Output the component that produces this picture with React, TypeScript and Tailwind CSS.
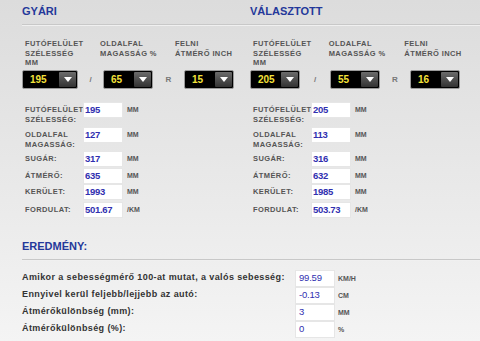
const sans = "font-['Liberation_Sans',Arial,sans-serif]";

type Info = { label: string[]; value: string; unit: string; h: string };

const columns = [
  {
    title: "GYÁRI",
    selects: [
      { value: "195", w: "w-[56px]", sep: "/" },
      { value: "65", w: "w-[50px]", sep: "R" },
      { value: "15", w: "w-[50px]", sep: "" },
    ],
    info: [
      { label: ["FUTÓFELÜLET", "SZÉLESSÉG:"], value: "195", unit: "MM", h: "h-[25px]" },
      { label: ["OLDALFAL", "MAGASSÁG:"], value: "127", unit: "MM", h: "h-[24px]" },
      { label: ["SUGÁR:"], value: "317", unit: "MM", h: "h-[17px]" },
      { label: ["ÁTMÉRŐ:"], value: "635", unit: "MM", h: "h-[16px]" },
      { label: ["KERÜLET:"], value: "1993", unit: "MM", h: "h-[18px]" },
      { label: ["FORDULAT:"], value: "501.67", unit: "/KM", h: "h-[17px]" },
    ] as Info[],
  },
  {
    title: "VÁLASZTOTT",
    selects: [
      { value: "205", w: "w-[50px]", sep: "/" },
      { value: "55", w: "w-[50px]", sep: "R" },
      { value: "16", w: "w-[50px]", sep: "" },
    ],
    info: [
      { label: ["FUTÓFELÜLET", "SZÉLESSÉG:"], value: "205", unit: "MM", h: "h-[25px]" },
      { label: ["OLDALFAL", "MAGASSÁG:"], value: "113", unit: "MM", h: "h-[24px]" },
      { label: ["SUGÁR:"], value: "316", unit: "MM", h: "h-[17px]" },
      { label: ["ÁTMÉRŐ:"], value: "632", unit: "MM", h: "h-[16px]" },
      { label: ["KERÜLET:"], value: "1985", unit: "MM", h: "h-[18px]" },
      { label: ["FORDULAT:"], value: "503.73", unit: "/KM", h: "h-[17px]" },
    ] as Info[],
  },
];

const headers = [
  ["FUTÓFELÜLET", "SZÉLESSÉG", "MM"],
  ["OLDALFAL", "MAGASSÁG %"],
  ["FELNI", "ÁTMÉRŐ INCH"],
];

const results = [
  { label: "Amikor a sebességmérő 100-at mutat, a valós sebesség:", value: "99.59", unit: "KM/H" },
  { label: "Ennyivel kerül feljebb/lejjebb az autó:", value: "-0.13", unit: "CM" },
  { label: "Átmérőkülönbség (mm):", value: "3", unit: "MM" },
  { label: "Átmérőkülönbség (%):", value: "0", unit: "%" },
];

function Rule() {
  return (
    <div>
      <div className="h-px bg-[#c8c8c8]" />
      <div className="h-px bg-[#f0f0f0]" />
    </div>
  );
}

function Select({ value, w }: { value: string; w: string }) {
  return (
    <div
      className={`flex h-[19px] ${w} items-center rounded-[2px] border border-[#9a9a9a] bg-black p-px`}
    >
      <span className="flex-1 pl-[6px] text-[10px] font-bold leading-none text-[#f4e23a]">
        {value}
      </span>
      <span className="flex h-full w-[17px] items-center justify-center rounded-[1px] bg-linear-to-b from-[#6c6c6c] to-[#333333]">
        <svg width="8" height="5" viewBox="0 0 8 5">
          <path d="M0 0h8L4 5z" fill="#ffffff" />
        </svg>
      </span>
    </div>
  );
}

export default function App() {
  return (
    <div
      className={`${sans} h-[341px] w-[480px] overflow-hidden bg-linear-to-b from-[#dcdcdc] to-[#f4f4f4]`}
    >
      <div className="flex">
        {columns.map((col, ci) => (
          <div
            key={col.title}
            className={ci === 0 ? "w-[250px] pl-[22px]" : "w-[230px]"}
          >
            <h2 className="pt-[5px] text-[11px] font-bold leading-[13px] text-[#24389a]">
              {col.title}
            </h2>
            <div className="mt-[6px]">
              <Rule />
            </div>

            <div className="mt-[13px] flex h-[31px] pl-[3px]">
              {headers.map((lines) => (
                <div
                  key={lines[0]}
                  className="w-[76px] text-[7.5px] font-bold leading-[9.5px] tracking-[0.4px] text-[#555555]"
                >
                  {lines.map((l) => (
                    <div key={l}>{l}</div>
                  ))}
                </div>
              ))}
            </div>

            <div className="flex items-center">
              {col.selects.map((s, i) => (
                <div
                  key={i}
                  className={`flex items-center ${
                    i === 2 ? "" : ci === 0 ? "w-[81px]" : "w-[80px]"
                  }`}
                >
                  <Select value={s.value} w={s.w} />
                  {s.sep && (
                    <span className="flex-1 text-center text-[8px] font-bold text-[#777777]">
                      {s.sep}
                    </span>
                  )}
                </div>
              ))}
            </div>

            <div className="mt-[13px] pl-[3px]">
              {col.info.map((row) => (
                <div key={row.label[0]} className={`flex items-start ${row.h}`}>
                  <div className="w-[58px] pt-[3px] text-[7.5px] font-bold leading-[9.5px] tracking-[0.4px] text-[#555555]">
                    {row.label.map((l) => (
                      <div key={l}>{l}</div>
                    ))}
                  </div>
                  <div className="flex h-[16px] w-[40px] items-center border border-[#e6e6e6] bg-white pl-[1px] text-[9.5px] font-bold tracking-[-0.3px] text-[#3030b0]">
                    {row.value}
                  </div>
                  <span className="ml-[4px] pt-[3px] text-[7px] font-bold leading-[9px] text-[#555555]">
                    {row.unit}
                  </span>
                </div>
              ))}
            </div>
          </div>
        ))}
      </div>

      <div className="pl-[22px]">
        <h2 className="mt-[21px] text-[11px] font-bold leading-[13px] text-[#24389a]">
          EREDMÉNY:
        </h2>
        <div className="mt-[6px]">
          <Rule />
        </div>
        <div className="mt-[9px]">
          {results.map((r) => (
            <div key={r.label} className="flex h-[17px] items-start">
              <div className="w-[273px] pt-[2px] text-[9px] font-bold leading-[11px] tracking-[0.4px] text-[#333333]">
                {r.label}
              </div>
              <div className="flex h-[17px] w-[40px] items-center border border-[#e6e6e6] bg-white pl-[3px] text-[9.5px] tracking-[-0.2px] text-[#3030b0]">
                {r.value}
              </div>
              <span className="ml-[3px] pt-[4px] text-[7px] font-bold leading-[9px] text-[#555555]">
                {r.unit}
              </span>
            </div>
          ))}
        </div>
      </div>
    </div>
  );
}
